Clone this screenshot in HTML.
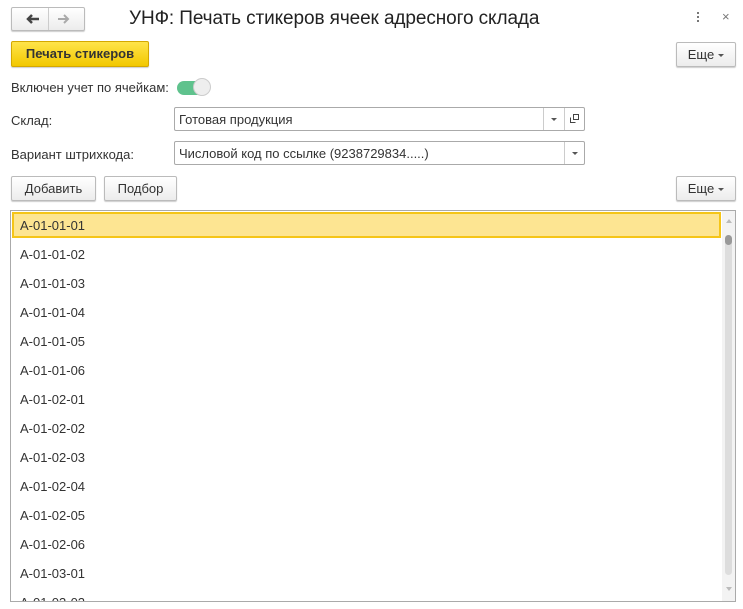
<!DOCTYPE html><html><head><style>
body{margin:0;width:743px;height:609px;background:#fff;font-family:"Liberation Sans",Arial,sans-serif;font-size:13px;color:#333;position:relative;overflow:hidden}
.a{position:absolute}
.btn{position:absolute;border:1px solid #bbb;border-radius:2px;background:linear-gradient(#fff,#ececec);box-shadow:0 1px 1px #ccc;box-sizing:border-box;text-align:center;color:#333}
.inp{position:absolute;border:1px solid #aaa;border-radius:2px;box-sizing:border-box;height:24px;background:#fff}
.row{position:absolute;left:20px;color:#333}
.tri{display:inline-block;width:0;height:0;border-left:3px solid transparent;border-right:3px solid transparent;border-top:3px solid #555;vertical-align:middle;margin-left:4px}
</style></head><body>
<div class="btn" style="left:11px;top:7px;width:74px;height:24px"></div>
<div class="a" style="left:48px;top:8px;width:1px;height:22px;background:#ccc"></div>
<svg class="a" style="left:20px;top:11px" width="60" height="16"><path d="M19 8H8M12 4L8 8L12 12" stroke="#444" stroke-width="2.5" fill="none"/><path d="M38 8H48M44 4L48 8L44 12" stroke="#aaa" stroke-width="2" fill="none"/></svg>
<div class="a" style="left:129px;top:8px;font-size:19px;color:#222;letter-spacing:-0.1px">УНФ: Печать стикеров ячеек адресного склада</div>
<div class="a" style="left:697px;top:12px;width:2px;height:12px;background:repeating-linear-gradient(#777 0 2px,transparent 2px 4px)"></div>
<div class="a" style="left:722px;top:9px;color:#777;font-size:13px">×</div>
<div class="btn" style="left:11px;top:41px;width:138px;height:26px;background:linear-gradient(#ffe44a,#f2c800);border-color:#d4a800;font-weight:bold;line-height:24px;font-size:13px">Печать стикеров</div>
<div class="btn" style="left:676px;top:42px;width:60px;height:25px;line-height:23px">Еще<span class="tri"></span></div>
<div class="a" style="left:11px;top:80px">Включен учет по ячейкам:</div>
<div class="a" style="left:177px;top:81px;width:32px;height:14px;border-radius:7px;background:#5fc28d"></div>
<div class="a" style="left:193px;top:78px;width:18px;height:18px;border-radius:50%;background:#eee;border:1px solid #ccc;box-sizing:border-box"></div>
<div class="a" style="left:11px;top:113px">Склад:</div>
<div class="inp" style="left:174px;top:107px;width:411px"><span class="a" style="left:4px;top:4px">Готовая продукция</span><div class="a" style="left:368px;top:0;width:1px;height:22px;background:#ccc"></div><div class="a" style="left:389px;top:0;width:1px;height:22px;background:#ccc"></div><span class="a tri" style="left:372px;top:10px"></span><svg class="a" style="left:394px;top:5px" width="11" height="11"><path d="M1.5 4.5V9.5H6.5" stroke="#444" fill="none"/><rect x="4.5" y="1.5" width="5" height="5" stroke="#444" fill="none"/></svg></div>
<div class="a" style="left:11px;top:147px">Вариант штрихкода:</div>
<div class="inp" style="left:174px;top:141px;width:411px"><span class="a" style="left:4px;top:4px">Числовой код по ссылке (9238729834.....)</span><div class="a" style="left:389px;top:0;width:1px;height:22px;background:#ccc"></div><span class="a tri" style="left:393px;top:10px"></span></div>
<div class="btn" style="left:11px;top:176px;width:85px;height:25px;line-height:23px">Добавить</div>
<div class="btn" style="left:104px;top:176px;width:73px;height:25px;line-height:23px">Подбор</div>
<div class="btn" style="left:676px;top:176px;width:60px;height:25px;line-height:23px">Еще<span class="tri"></span></div>
<div class="a" style="left:10px;top:210px;width:726px;height:392px;border:1px solid #aaa;box-sizing:border-box;overflow:hidden">
<div class="a" style="left:1px;top:1px;width:709px;height:26px;background:#fde592;border:2px solid #f5c518;box-sizing:border-box"></div>
<div class="a" style="left:711px;top:0;width:14px;height:390px;background:#f3f3f3"></div>
<div class="a" style="left:715px;top:8px;width:0;height:0;border-left:3px solid transparent;border-right:3px solid transparent;border-bottom:4px solid #bbb"></div>
<div class="a" style="left:714px;top:24px;width:7px;height:340px;border-radius:4px;background:#ddd"></div>
<div class="a" style="left:714px;top:24px;width:7px;height:10px;border-radius:4px;background:#999"></div>
<div class="a" style="left:715px;top:376px;width:0;height:0;border-left:3px solid transparent;border-right:3px solid transparent;border-top:4px solid #bbb"></div>
</div>
<div class="row" style="top:218px">A-01-01-01</div>
<div class="row" style="top:247px">A-01-01-02</div>
<div class="row" style="top:276px">A-01-01-03</div>
<div class="row" style="top:305px">A-01-01-04</div>
<div class="row" style="top:334px">A-01-01-05</div>
<div class="row" style="top:363px">A-01-01-06</div>
<div class="row" style="top:392px">A-01-02-01</div>
<div class="row" style="top:421px">A-01-02-02</div>
<div class="row" style="top:450px">A-01-02-03</div>
<div class="row" style="top:479px">A-01-02-04</div>
<div class="row" style="top:508px">A-01-02-05</div>
<div class="row" style="top:537px">A-01-02-06</div>
<div class="row" style="top:566px">A-01-03-01</div>
<div class="row" style="top:595px;height:6px;overflow:hidden">A-01-03-02</div>
</body></html>
